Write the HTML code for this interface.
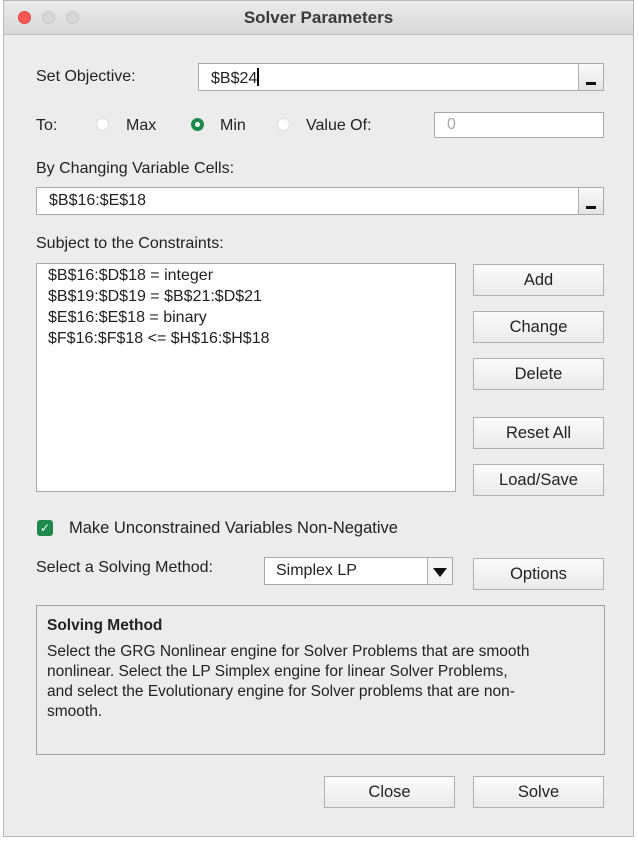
<!DOCTYPE html>
<html><head><meta charset="utf-8"><style>
*{box-sizing:border-box;margin:0;padding:0}
body{width:638px;height:844px;background:#fff;font-family:"Liberation Sans",sans-serif;font-size:16px;color:#222;position:relative;overflow:hidden}
.win{position:absolute;left:3px;top:0;width:631px;height:837px;background:#ececec;border:1px solid #b8b8b8}
.title{position:absolute;left:0;top:0;width:100%;height:34px;background:linear-gradient(#ebebeb,#d8d8d8);border-bottom:1px solid #c0c0c0;text-align:center;font-weight:bold;font-size:17px;line-height:34px;color:#3a3a3a}
.dot{position:absolute;top:10px;width:13px;height:13px;border-radius:50%;background:#d6d6d6;border:1px solid #c8c8c8}
.a{position:absolute;white-space:nowrap}
.in{position:absolute;background:#fff;border:1px solid #a9a9a9}
.btn{position:absolute;width:131px;height:32px;background:linear-gradient(#fbfbfb,#eaeaea);border:1px solid #b0b0b0;text-align:center;line-height:30px;font-size:16.5px}
.sb{position:absolute;right:0;top:0;width:25px;height:100%;background:linear-gradient(#fafafa,#e4e4e4);border-left:1px solid #b0b0b0}
.sb:after{content:"";position:absolute;left:7px;bottom:5px;width:10px;height:3px;background:#111}
.rad{position:absolute;width:13px;height:13px;border-radius:50%;background:#fff;border:1px solid #ddd}
</style></head><body>
<div class="win">
<div class="title">Solver Parameters</div>
<div class="dot" style="left:14px;background:#fc5753;border-color:#df4744"></div>
<div class="dot" style="left:38px"></div>
<div class="dot" style="left:62px"></div>

<div class="a" style="left:32px;top:67px">Set Objective:</div>
<div class="in" style="left:194px;top:62px;width:406px;height:28px"><span class="a" style="left:12px;top:4px">$B$24<span style="display:inline-block;width:2px;height:18px;background:#000;vertical-align:-3px"></span></span><div class="sb"></div></div>

<div class="a" style="left:32px;top:116px">To:</div>
<div class="rad" style="left:92px;top:117px"></div><div class="a" style="left:122px;top:116px">Max</div>
<div class="rad" style="left:187px;top:117px;background:#fff;border:4px solid #1e8a4e"></div><div class="a" style="left:216px;top:116px">Min</div>
<div class="rad" style="left:273px;top:117px"></div><div class="a" style="left:302px;top:116px">Value Of:</div>
<div class="in" style="left:430px;top:111px;width:170px;height:26px"><span class="a" style="left:12px;top:3px;color:#aaa">0</span></div>

<div class="a" style="left:32px;top:159px">By Changing Variable Cells:</div>
<div class="in" style="left:32px;top:186px;width:568px;height:28px"><span class="a" style="left:12px;top:4px">$B$16:$E$18</span><div class="sb"></div></div>

<div class="a" style="left:32px;top:234px">Subject to the Constraints:</div>
<div class="in" style="left:32px;top:262px;width:420px;height:229px;line-height:21px;padding:1px 0 0 11px">$B$16:$D$18 = integer<br>$B$19:$D$19 = $B$21:$D$21<br>$E$16:$E$18 = binary<br>$F$16:$F$18 &lt;= $H$16:$H$18</div>

<div class="btn" style="left:469px;top:263px">Add</div>
<div class="btn" style="left:469px;top:310px">Change</div>
<div class="btn" style="left:469px;top:357px">Delete</div>
<div class="btn" style="left:469px;top:416px">Reset All</div>
<div class="btn" style="left:469px;top:463px">Load/Save</div>

<div class="a" style="left:33px;top:519px;width:16px;height:16px;background:#1e8a4e;border-radius:3px;color:#fff;font-size:12px;line-height:16px;text-align:center">✓</div>
<div class="a" style="left:65px;top:518px;font-size:16.5px">Make Unconstrained Variables Non-Negative</div>

<div class="a" style="left:32px;top:558px">Select a Solving Method:</div>
<div class="in" style="left:260px;top:556px;width:189px;height:28px"><span class="a" style="left:11px;top:4px">Simplex LP</span><div style="position:absolute;right:0;top:0;width:25px;height:100%;border-left:1px solid #b0b0b0;background:#f4f4f4"><div style="position:absolute;left:5px;top:10px;border-left:7px solid transparent;border-right:7px solid transparent;border-top:9px solid #111"></div></div></div>
<div class="btn" style="left:469px;top:557px">Options</div>

<div style="position:absolute;left:32px;top:604px;width:569px;height:150px;border:1px solid #a0a0a0;padding:10px 10px;font-size:15.5px;line-height:20px;white-space:nowrap">
<b>Solving Method</b><div style="margin-top:6px">Select the GRG Nonlinear engine for Solver Problems that are smooth<br>nonlinear. Select the LP Simplex engine for linear Solver Problems,<br>and select the Evolutionary engine for Solver problems that are non-<br>smooth.</div></div>

<div class="btn" style="left:320px;top:775px">Close</div>
<div class="btn" style="left:469px;top:775px">Solve</div>
</div>
</body></html>
